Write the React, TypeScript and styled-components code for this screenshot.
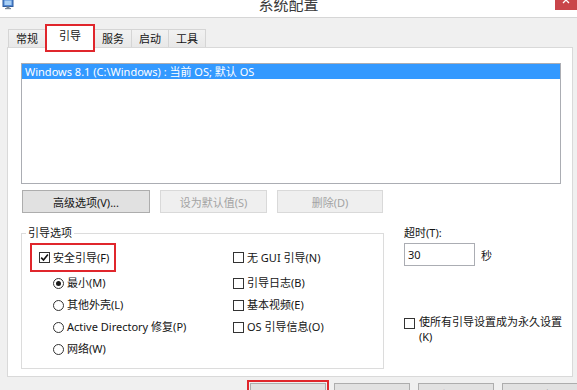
import React from "react";
import styled, { createGlobalStyle, css } from "styled-components";

const GlobalStyle = createGlobalStyle`
  html, body { margin: 0; padding: 0; background: #f0f0f0; }
  body {
    font-family: "Noto Sans", "Noto Sans CJK SC", sans-serif;
    font-size: 11px;
    color: #141414;
  }
  * { box-sizing: border-box; }
`;

const RED = "#e0262c";

const Window = styled.div`
  width: 577px;
  height: 390px;
  overflow: hidden;
  background: #f0f0f0;
  display: flex;
  flex-direction: column;
`;

const TitleBar = styled.div`
  height: 18px;
  flex: none;
  background: #ffffff;
  border-bottom: 1px solid #d6d6d6;
  display: grid;
  grid-template-columns: 1fr auto 1fr;
  align-items: start;
  overflow: hidden;
`;

const AppIcon = styled.svg`
  width: 12px;
  height: 12px;
  margin: -2px 0 0 2px;
`;

const Title = styled.div`
  font-size: 15px;
  line-height: 16px;
  margin-top: -4px;
  color: #3a3a3a;
`;

const CloseButton = styled.div`
  justify-self: end;
  width: 22px;
  height: 10px;
  background: #c9454a;
  display: flex;
  justify-content: center;
`;

const Body = styled.div`
  padding-top: 6px;
  display: flex;
  flex-direction: column;
`;

const TabStrip = styled.div`
  display: flex;
  align-items: flex-end;
  height: 23px;
  margin-left: 9px;
  position: relative;
  z-index: 1;
`;

const Tab = styled.div<{ $active?: boolean }>`
  height: 18px;
  padding: 0 7px;
  margin-left: -1px;
  border: 1px solid #d5d5d5;
  border-bottom: none;
  background: linear-gradient(#f2f2f2, #e8e8e8);
  display: flex;
  align-items: center;
  justify-content: center;
  line-height: 14px;
  ${(p) =>
    p.$active &&
    css`
      height: 28px;
      width: 50px;
      margin-bottom: -5px;
      background: #ffffff;
      align-items: flex-start;
      padding-top: 4px;
      outline: 2px solid ${RED};
      outline-offset: -2px;
      position: relative;
    `}
`;

const Panel = styled.div`
  margin-left: 7px;
  width: 566px;
  height: 330px;
  background: #ffffff;
  border: 1px solid #d9d9d9;
  padding: 15px 0 0 13px;
  display: flex;
  flex-direction: column;
`;

const ListBox = styled.div`
  width: 540px;
  height: 121px;
  border: 1px solid #abadb3;
  background: #ffffff;
`;

const ListItem = styled.div<{ $selected?: boolean }>`
  height: 15px;
  line-height: 15px;
  padding-left: 3px;
  white-space: nowrap;
  background: ${(p) => (p.$selected ? "#3399ff" : "transparent")};
  color: ${(p) => (p.$selected ? "#ffffff" : "#141414")};
`;

const ButtonRow = styled.div`
  display: flex;
  gap: 10px;
  margin: 6px 0 0 1px;
`;

const Button = styled.button<{ $w: number; $marked?: boolean }>`
  width: ${(p) => p.$w}px;
  height: 23px;
  padding: 0;
  border: 1px solid #adadad;
  background: #e1e1e1;
  font: inherit;
  color: #141414;
  flex: none;
  &:disabled {
    background: #efefef;
    border-color: #d9d9d9;
    color: #a3a3a3;
  }
  ${(p) =>
    p.$marked &&
    css`
      outline: 2px solid ${RED};
      outline-offset: 1px;
    `}
`;

const Lower = styled.div`
  display: flex;
  gap: 20px;
  margin-top: 13px;
`;

const GroupBox = styled.fieldset`
  width: 363px;
  height: 143px;
  margin: 0;
  padding: 0;
  border: 1px solid #dcdcdc;
  min-width: 0;
`;

const Legend = styled.legend`
  padding: 0 2px;
  margin-left: 4px;
  line-height: 14px;
`;

const OptionsGrid = styled.div`
  display: grid;
  grid-template-columns: 203px 1fr;
  grid-template-rows: 29px repeat(4, 22px);
  grid-auto-flow: column;
  margin: 3px 0 0 8px;
`;

const Option = styled.label<{ $indent?: number }>`
  display: flex;
  align-items: center;
  gap: 3px;
  padding-left: ${(p) => p.$indent ?? 0}px;
  white-space: nowrap;
  line-height: 14px;
`;

const MarkedOption = styled(Option)`
  width: 86px;
  border: 2px solid ${RED};
  padding-left: 7px;
`;

const BoxMark = styled.span`
  width: 11px;
  height: 11px;
  flex: none;
  border: 1px solid #333333;
  background: #ffffff;
  display: flex;
  align-items: center;
  justify-content: center;
`;

const RadioMark = styled.span<{ $on?: boolean }>`
  width: 11px;
  height: 11px;
  flex: none;
  border: 1px solid #333333;
  border-radius: 50%;
  background: #ffffff;
  display: flex;
  align-items: center;
  justify-content: center;
  &::after {
    content: "";
    width: 5px;
    height: 5px;
    border-radius: 50%;
    background: ${(p) => (p.$on ? "#1a1a1a" : "transparent")};
  }
`;

const SideColumn = styled.div`
  width: 160px;
  display: flex;
  flex-direction: column;
`;

const SideLabel = styled.div`
  line-height: 14px;
`;

const TimeoutRow = styled.div`
  display: flex;
  align-items: center;
  gap: 6px;
  margin-top: 3px;
`;

const TimeoutInput = styled.input`
  width: 71px;
  height: 23px;
  border: 1px solid #abadb3;
  padding: 0 0 0 3px;
  font: inherit;
  color: #141414;
  background: #ffffff;
  outline: none;
`;

const PermanentRow = styled.label`
  display: flex;
  align-items: flex-start;
  gap: 4px;
  margin-top: 52px;
`;

const PermanentText = styled.span`
  line-height: 15px;
  margin-top: -4px;
  width: 145px;
`;

const Footer = styled.div`
  display: flex;
  gap: 8px;
  padding-left: 250px;
  margin-top: 6px;
`;

const Check = ({ on }: { on?: boolean }) => (
  <BoxMark>
    {on && (
      <svg width="9" height="9" viewBox="0 0 9 9">
        <path d="M1.2 4.6 L3.5 7 L7.9 1.6" fill="none" stroke="#111" strokeWidth="1.6" />
      </svg>
    )}
  </BoxMark>
);

export default function App() {
  return (
    <>
      <GlobalStyle />
      <Window>
        <TitleBar>
          <AppIcon viewBox="0 0 12 12">
            <rect x="1" y="1" width="10" height="7.5" fill="#4f86d3" stroke="#2f5d9e" strokeWidth="1" />
            <rect x="2.5" y="2.5" width="7" height="4.5" fill="#a9d0f5" />
            <rect x="4.5" y="8.5" width="3" height="1.5" fill="#7a8796" />
            <rect x="3" y="10" width="6" height="1.2" fill="#7a8796" />
          </AppIcon>
          <Title>系统配置</Title>
          <CloseButton>
            <svg width="10" height="10" viewBox="0 0 10 10">
              <path d="M2 -3 L8 3 M8 -3 L2 3" stroke="#fff" strokeWidth="1.3" />
            </svg>
          </CloseButton>
        </TitleBar>
        <Body>
          <TabStrip>
            <Tab>常规</Tab>
            <Tab $active>引导</Tab>
            <Tab>服务</Tab>
            <Tab>启动</Tab>
            <Tab>工具</Tab>
          </TabStrip>
          <Panel>
            <ListBox>
              <ListItem $selected>Windows 8.1 (C:\Windows) : 当前 OS; 默认 OS</ListItem>
            </ListBox>
            <ButtonRow>
              <Button $w={128}>高级选项(V)...</Button>
              <Button $w={107} disabled>
                设为默认值(S)
              </Button>
              <Button $w={106} disabled>
                删除(D)
              </Button>
            </ButtonRow>
            <Lower>
              <GroupBox>
                <Legend>引导选项</Legend>
                <OptionsGrid>
                  <MarkedOption>
                    <Check on />
                    安全引导(F)
                  </MarkedOption>
                  <Option $indent={23}>
                    <RadioMark $on />
                    最小(M)
                  </Option>
                  <Option $indent={23}>
                    <RadioMark />
                    其他外壳(L)
                  </Option>
                  <Option $indent={23}>
                    <RadioMark />
                    Active Directory 修复(P)
                  </Option>
                  <Option $indent={23}>
                    <RadioMark />
                    网络(W)
                  </Option>
                  <Option>
                    <Check />
                    无 GUI 引导(N)
                  </Option>
                  <Option>
                    <Check />
                    引导日志(B)
                  </Option>
                  <Option>
                    <Check />
                    基本视频(E)
                  </Option>
                  <Option>
                    <Check />
                    OS 引导信息(O)
                  </Option>
                </OptionsGrid>
              </GroupBox>
              <SideColumn>
                <SideLabel>超时(T):</SideLabel>
                <TimeoutRow>
                  <TimeoutInput defaultValue="30" readOnly />
                  <span>秒</span>
                </TimeoutRow>
                <PermanentRow>
                  <Check />
                  <PermanentText>使所有引导设置成为永久设置(K)</PermanentText>
                </PermanentRow>
              </SideColumn>
            </Lower>
          </Panel>
          <Footer>
            <Button $w={76} $marked>
              确定
            </Button>
            <Button $w={76}>取消</Button>
            <Button $w={76}>应用(A)</Button>
            <Button $w={76}>帮助</Button>
          </Footer>
        </Body>
      </Window>
    </>
  );
}
